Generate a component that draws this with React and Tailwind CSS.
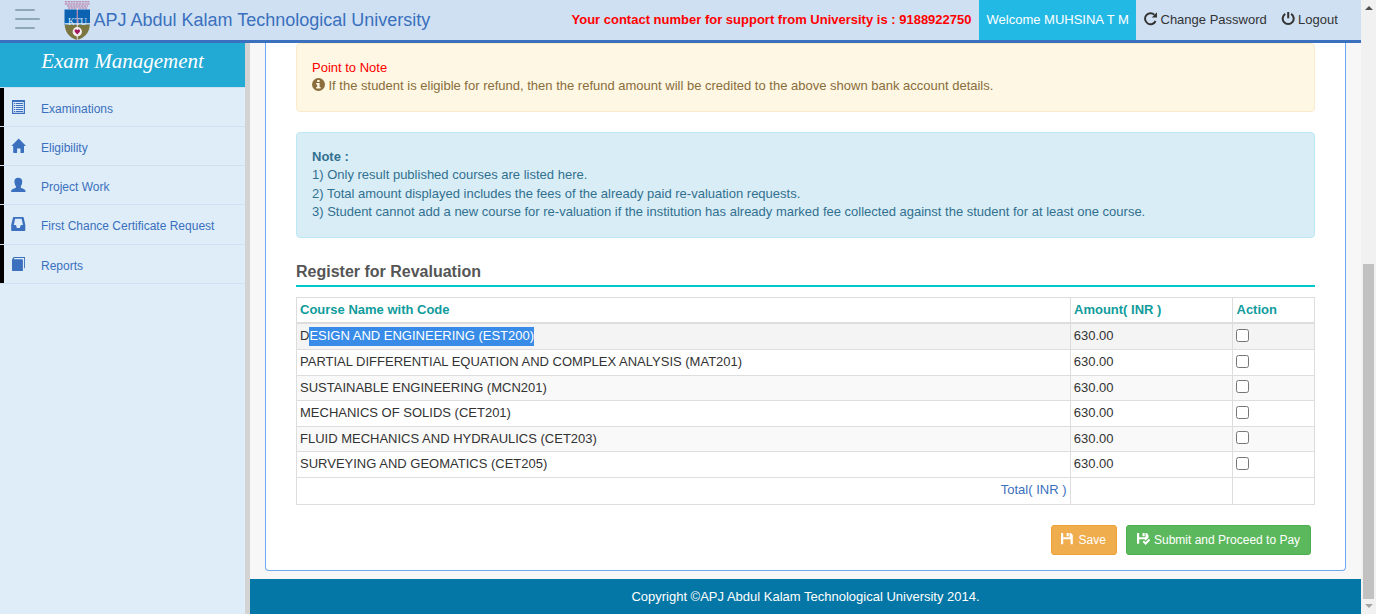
import React from "react";

const sans = "font-['Liberation_Sans',Arial,sans-serif]";

const ListIcon = () => (
  <svg width="15" height="16" viewBox="0 0 15 16" fill="none">
    <path fill="currentColor" fillRule="evenodd" d="M1 1h13v14H1zM2.200 3v10.800h10.600V3z" />
    <path stroke="currentColor" strokeWidth="1.100" d="M3 4.500h1.300M5 4.500h7M3 6.500h1.300M5 6.500h7M3 8.500h1.300M5 8.500h7M3 10.500h1.300M5 10.500h7M3 12.500h1.300M5 12.500h7" />
  </svg>
);
const HomeIcon = () => (
  <svg width="15" height="16" viewBox="0 0 15 16" fill="currentColor">
    <path d="M7.700.5 15 8H13V14.300q0 .7-.7.7H9.500v-4.600H6.100V15H2.900q-.7 0-.7-.7V8H.4z" />
  </svg>
);
const UserIcon = () => (
  <svg width="15" height="16" viewBox="0 0 15 16" fill="currentColor">
    <path d="M7.300.8C9.700.8 11.200 2.200 11.200 4.300c0 2-.4 3.800-1.400 4.900v1.300c.7 1.200 4.600 1.300 4.700 3.500v1H.2v-1c.1-2.200 4-2.300 4.700-3.500V9.200C3.900 8.100 3.400 6.300 3.400 4.300 3.400 2.200 4.900.8 7.300.8z" />
  </svg>
);
const InboxIcon = () => (
  <svg width="15" height="16" viewBox="0 0 15 16" fill="currentColor">
    <path fillRule="evenodd" d="M2.800.9h9.100q.7 0 .8.7L14.300 9v5.200q0 .8-.8.8H1q-.8 0-.8-.8V9L2 1.600Q2.100.9 2.800.9zM4.100 2.700 2.800 9h1.600q.5 0 .7.500l.6 2q.2.500.7.500h1.900q.5 0 .7-.5l.6-2q.2-.5.7-.5h1.700L10.600 2.700z" />
  </svg>
);
const BookIcon = () => (
  <svg width="15" height="16" viewBox="0 0 15 16" fill="currentColor">
    <path d="M1 3.500 2.700 1H14v10.600l-.9 1.200V2.100H3.500L2.700 3.200H11q.9 0 .9.8v11H1.800Q1 15 1 14.200z" />
  </svg>
);

const menu = [
  { label: "Examinations", Icon: ListIcon, h: "h-[38px]" },
  { label: "Eligibility", Icon: HomeIcon, h: "h-[38px]" },
  { label: "Project Work", Icon: UserIcon, h: "h-[38px]" },
  { label: "First Chance Certificate Request", Icon: InboxIcon, h: "h-[39px]" },
  { label: "Reports", Icon: BookIcon, h: "h-[38px]" },
];

const courses = [
  { name: "DESIGN AND ENGINEERING (EST200)", row: "h-[26px] bg-[#f4f4f4]", box: "mt-[5px]", selected: true },
  { name: "PARTIAL DIFFERENTIAL EQUATION AND COMPLEX ANALYSIS (MAT201)", row: "h-[26px]", box: "mt-[5px]" },
  { name: "SUSTAINABLE ENGINEERING (MCN201)", row: "h-[25px] bg-[#f9f9f9]", box: "mt-[4px]" },
  { name: "MECHANICS OF SOLIDS (CET201)", row: "h-[26px]", box: "mt-[5px]" },
  { name: "FLUID MECHANICS AND HYDRAULICS (CET203)", row: "h-[25px] bg-[#f9f9f9]", box: "mt-[4px]" },
  { name: "SURVEYING AND GEOMATICS (CET205)", row: "h-[26px]", box: "mt-[5px]" },
];

const Crest = () => (
  <svg className="block shrink-0" width="27" height="40" viewBox="0 0 27 40">
    <path d="M.8 1.700h25M.8 4h25M3 6h21M4 8h19" stroke="#bd93bb" strokeWidth="1.500" strokeDasharray="2.300 .5" />
    <path d="M.5 9.500h25.500V25H.5z" fill="#0b62b0" />
    <path d="M.7 24.500h25.100c0 7-4.700 13.500-12.700 15.500C5.300 38 .7 31.500.7 24.500z" fill="#7b7640" />
    <path d="M.5 23.800h25.500" stroke="#cfe0f3" strokeWidth="1.400" />
    <text x="4" y="24.500" fontSize="10.500" fontFamily="Liberation Serif, serif" fill="#dcebf9" textLength="19" lengthAdjust="spacingAndGlyphs">KTU</text>
    <circle cx="13.300" cy="31.700" r="4.700" fill="#f4eef1" />
    <path d="M13.300 34.500 10.700 31.700v-1.600l1.300-.9 1.300.9 1.300-.9 1.300.9v1.600z" fill="#a3195b" />
    <path d="M13.300 8v19M13.300 36v4" stroke="#f0e6ee" strokeWidth=".9" />
    <path d="M13.300 10v13" stroke="#b0487e" strokeWidth=".6" />
  </svg>
);

const Header = () => (
  <header className="flex h-[43px] shrink-0 border-b-[3px] border-[#3a70bd] bg-[#cfe0f3] text-[13px] leading-[40px] text-[#333]">
    <div className="flex w-[49px] shrink-0 flex-col gap-[7px] pl-[15px] pt-[9px]">
      <span className="h-[2px] w-[20px] rounded-full bg-[#8fa8b9]" />
      <span className="h-[2px] w-[25px] rounded-full bg-[#8fa8b9]" />
      <span className="h-[2px] w-[20px] rounded-full bg-[#8fa8b9]" />
    </div>
    <div className="flex grow pl-[15px]">
      <Crest />
      <span className="pl-[2.500px] text-[18px] text-[#3a70bd]">APJ Abdul Kalam Technological University</span>
    </div>
    <b className="pr-[7.500px] text-[#ff0000]">Your contact number for support from University is : 9188922750</b>
    <span className="w-[157px] bg-[#22b9e5] pl-[7.500px] text-white">Welcome MUHSINA T M</span>
    <span className="flex w-[138px] gap-[3px] pl-[7.500px]">
      <svg className="mt-3 shrink-0" width="14" height="14" viewBox="0 0 14 14" fill="none">
        <path d="M11.600 9A5.500 5.500 0 1 1 10.400 2.800" stroke="currentColor" strokeWidth="1.900" />
        <path d="M13 .3v5.200H7.800z" fill="currentColor" />
      </svg>
      Change Password
    </span>
    <span className="flex w-[87px] gap-[3px] pl-[7px]">
      <svg className="mt-3 shrink-0" width="14" height="14" viewBox="0 0 14 14" fill="none" stroke="currentColor" strokeWidth="2">
        <path d="M4.300 1.900A5.500 5.500 0 1 0 10.100 1.900" />
        <path d="M7.200 0v6.300" />
      </svg>
      Logout
    </span>
  </header>
);

const Sidebar = () => (
  <aside className="w-[250px] shrink-0 border-r-[5px] border-[#d3d3d3] bg-[#dfedf9]">
    <h2 className="h-[44px] bg-[#22a9d4] text-center font-['Liberation_Serif',serif] text-[21px] italic leading-[36px] text-white">Exam Management</h2>
    <nav className="border-t border-[#cfe0f3]">
      {menu.map(({ label, Icon, h }) => (
        <div key={label} className="border-b border-[#cfe0f3]">
          <div className={`flex border-l-4 border-black pl-[7px] text-[12px] text-[#3a70bd] ${h}`}>
            <span className="mt-[11px] w-[30px]"><Icon /></span>
            <span className="leading-[43px]">{label}</span>
          </div>
        </div>
      ))}
    </nav>
  </aside>
);

const cell = "border-r border-[#ddd]";
const cols = "grid grid-cols-[774px_162px_82px] border-b border-[#ddd]";

const CourseTable = () => (
  <div className="mt-[10px] border-l border-t border-[#ddd] text-[13px] leading-[24px] text-[#333]">
    <div className="grid h-[26px] grid-cols-[774px_162px_82px] border-b-2 border-[#ddd] font-bold text-[#109c9c]">
      <span className={`${cell} pl-[3px]`}>Course Name with Code</span>
      <span className={`${cell} pl-[3px]`}>Amount( INR )</span>
      <span className={`${cell} pl-[3.500px]`}>Action</span>
    </div>
    {courses.map((c) => (
      <div key={c.name} className={`${cols} ${c.row}`}>
        <span className={`${cell} pl-[3px]`}>
          {c.selected ? (
            <>D<span className="mt-[3px] inline-block h-[19px] bg-[#388ce8] align-top leading-[18px] text-white">{c.name.slice(1)}</span></>
          ) : c.name}
        </span>
        <span className={`${cell} pl-[2.700px]`}>630.00</span>
        <span className={`${cell} pl-[3px]`}>
          <input type="checkbox" className={`block size-[13px] ${c.box}`} />
        </span>
      </div>
    ))}
    <div className={`${cols} h-[27px]`}>
      <span className={`${cell} pr-[3.500px] text-right text-[#3a70bd]`}>Total( INR )</span>
      <span className={cell} />
      <span className={cell} />
    </div>
  </div>
);

const Footer = () => (
  <footer className="h-[35px] shrink-0 bg-[#0477a6] text-center text-[13px] leading-[35px] text-white">
    Copyright ©APJ Abdul Kalam Technological University 2014.
  </footer>
);

const Scrollbar = () => (
  <div className="flex w-[15px] shrink-0 flex-col items-center justify-between bg-[#f1f1f1] pb-[6px] pt-[6px]">
    <svg width="8" height="4" viewBox="0 0 8 4"><path d="M0 4 4 0l4 4z" fill="#505050" /></svg>
    <div className="flex grow flex-col justify-end pb-[5px]">
      <div className="h-[335px] w-[11px] bg-[#c1c1c1]" />
    </div>
    <svg width="8" height="4" viewBox="0 0 8 4"><path d="M0 0h8L4 4z" fill="#a3a3a3" /></svg>
  </div>
);

export default function App() {
  return (
    <div className={`flex h-[614px] w-[1376px] overflow-hidden bg-white ${sans}`}>
      <div className="flex w-[1361px] flex-col">
        <Header />
        <div className="flex min-h-0 grow">
          <Sidebar />
          <div className="flex grow flex-col bg-[#f7f7f7]">
            <main className="mx-[15px] mb-2 grow rounded-b border border-t-0 border-[#6fa8ee] bg-white px-[30px]">
              <section className="h-[69px] rounded border border-[#faebcc] bg-[#fdf7e3] px-[15px] pt-[14.700px] text-[13px] leading-[18.500px] text-[#8a6d3b]">
                <p className="text-[#ff0000]">Point to Note</p>
                <p className="flex gap-[3.500px]">
                  <svg className="mt-px shrink-0" width="13" height="13" viewBox="0 0 13 13">
                    <circle cx="6.500" cy="6.500" r="6.500" fill="#8a6d3b" />
                    <path d="M5.200 2h2.400v2H5.200zM4.200 5h3.400v4h1v1.500H4.200V9h1V6.500h-1z" fill="#fdf7e3" />
                  </svg>
                  If the student is eligible for refund, then the refund amount will be credited to the above shown bank account details.
                </p>
              </section>
              <section className="mt-5 h-[106px] rounded border border-[#bce8f1] bg-[#d9edf7] px-[15px] pt-[14.700px] text-[13px] leading-[18.500px] text-[#31708f]">
                <p className="font-bold">Note :</p>
                <p>1) Only result published courses are listed here.</p>
                <p>2) Total amount displayed includes the fees of the already paid re-valuation requests.</p>
                <p>3) Student cannot add a new course for re-valuation if the institution has already marked fee collected against the student for at least one course.</p>
              </section>
              <h3 className="mt-5 h-[29px] border-b-2 border-[#00c8cf] text-[16px] font-bold leading-[27px] text-[#555]">Register for Revaluation</h3>
              <CourseTable />
              <div className="mt-5 flex justify-end gap-[9px] pr-1 text-[12px] leading-[28px] text-white">
                <button className="flex h-[30px] w-[66px] gap-[5.500px] rounded-[3px] border border-[#eea236] bg-[#f0ad4e] pl-[9px]">
                  <svg className="mt-[7px] shrink-0" width="12" height="12" viewBox="0 0 12 12" fill="currentColor">
                    <path d="M0 0h2.200v4.300h6.400V0h1.200L11.800 1.900V11.200H9.600V6.200H2.200v5H0zM5.600 0h2.200v3.200H5.600z" />
                  </svg>
                  Save
                </button>
                <button className="flex h-[30px] w-[185px] gap-1 rounded-[3px] border border-[#4cae4c] bg-[#5cb85c] pl-[10px]">
                  <svg className="mt-[7px] shrink-0" width="13" height="12" viewBox="0 0 13 12" fill="currentColor">
                    <path d="M0 0h2.200v4.300h6.300V0h1.200L11.500 1.900V4.700L8.600 7.500 7.300 6.200H2.200v4.600H0zM5.500 0h2.200v3.200H5.500z" />
                    <path d="m6.300 8.300 2.300 2.200 4-4" fill="none" stroke="currentColor" strokeWidth="2" />
                  </svg>
                  Submit and Proceed to Pay
                </button>
              </div>
            </main>
            <Footer />
          </div>
        </div>
      </div>
      <Scrollbar />
    </div>
  );
}
